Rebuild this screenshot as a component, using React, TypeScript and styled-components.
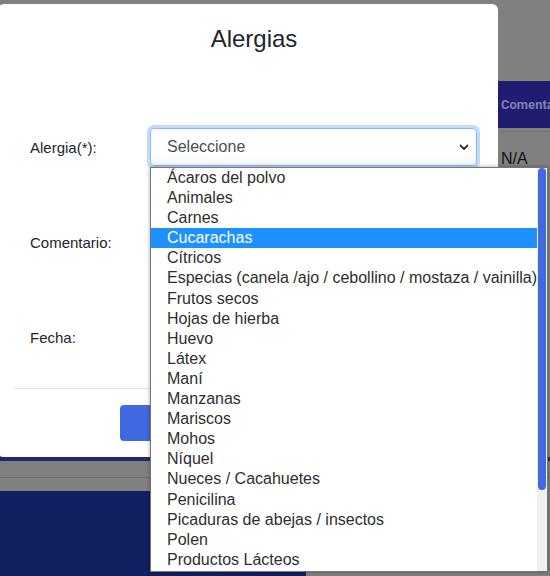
import React from "react";
import styled, { createGlobalStyle } from "styled-components";

const GlobalStyle = createGlobalStyle`
  html, body {
    margin: 0;
    padding: 0;
    width: 550px;
    height: 576px;
    overflow: hidden;
    font-family: "Liberation Sans", Arial, sans-serif;
  }
  * { box-sizing: border-box; }
`;

const Screen = styled.div`
  position: relative;
  width: 550px;
  height: 576px;
  overflow: hidden;
  background: #808080;
`;

/* Page behind the dimmed backdrop */
const BackPage = styled.div`
  display: flex;
  flex-direction: column;
  height: 100%;
`;

const TopGap = styled.div`
  height: 81px;
`;

const TableHead = styled.div`
  height: 47px;
  background: #1f1c72;
  display: grid;
  grid-template-columns: 501px 1fr;
  align-items: center;
`;

const HeadCell = styled.div`
  font-family: Roboto, "Liberation Sans", sans-serif;
  font-weight: 700;
  font-size: 13px;
  color: #7d80ad;
  white-space: nowrap;
  overflow: hidden;
`;

const TableRow = styled.div`
  margin-top: 3px;
  border-top: 1px solid #777;
  height: 54px;
  display: grid;
  grid-template-columns: 501px 1fr;
  align-items: center;
`;

const Cell = styled.div`
  font-size: 16px;
  line-height: 20px;
  color: #141414;
  white-space: nowrap;
  overflow: hidden;
`;

const Filler = styled.div`
  flex: 1;
`;

const FooterStrip = styled.div`
  height: 4px;
  background: #1e2a6a;
`;

const GrayBand = styled.div`
  height: 30px;
  padding-top: 16px;
`;

const BandLine = styled.div`
  height: 1px;
  background: #6c6c6c;
`;

const NavyBlock = styled.div`
  height: 85px;
  width: 306px;
  background: #121f60;
`;

/* Modal */
const Modal = styled.div`
  position: absolute;
  left: -2px;
  top: 4px;
  width: 500px;
  height: 453px;
  background: #fff;
  border-radius: 6px;
  display: flex;
  flex-direction: column;
`;

const Title = styled.h2`
  margin: 0;
  padding: 20px 0 0 12px;
  font-size: 24px;
  line-height: 29px;
  font-weight: 400;
  text-align: center;
  color: #212529;
`;

const Form = styled.div`
  margin-top: 75px;
  padding-left: 32px;
  display: grid;
  grid-template-columns: 120px 327px;
  grid-template-rows: 38px 62px 38px;
  row-gap: 45px;
  align-items: center;
`;

const Label = styled.label`
  font-size: 15px;
  color: #212529;
`;

const SelectBox = styled.div`
  height: 38px;
  border: 1px solid #80bdff;
  border-radius: 4px;
  box-shadow: 0 0 0 3px #c2dcf8;
  padding: 0 7px 0 16px;
  display: flex;
  align-items: center;
  justify-content: space-between;
  font-size: 16px;
  color: #495057;
  background: linear-gradient(#fff 70%, #f6f6f6);
`;

const TextArea = styled.div`
  height: 62px;
  border: 1px solid #ced4da;
  border-radius: 4px;
`;

const DateBox = styled.div`
  height: 38px;
  border: 1px solid #ced4da;
  border-radius: 4px;
`;

const Separator = styled.div`
  margin: 32px 14px 0 16px;
  height: 1px;
  background: #e1e0ee;
`;

const Footer = styled.div`
  padding: 16px 0;
  display: flex;
  justify-content: center;
`;

const PrimaryButton = styled.button`
  width: 256px;
  height: 36px;
  border: none;
  border-radius: 4px;
  background: #4169e1;
`;

/* Native-like dropdown list */
const OptionList = styled.div`
  position: absolute;
  left: 150px;
  top: 167px;
  width: 398px;
  height: 405px;
  border: 1px solid #767676;
  background: #fff;
  display: flex;
  box-shadow: 0 0 4px rgba(0, 0, 0, 0.35);
`;

const Options = styled.div`
  flex: 1;
  min-width: 0;
  overflow: hidden;
`;

const Option = styled.div<{ $active?: boolean }>`
  height: 20.1px;
  line-height: 20px;
  padding-left: 16px;
  font-size: 16px;
  white-space: nowrap;
  color: ${(p) => (p.$active ? "#fff" : "#2e2e2e")};
  background: ${(p) => (p.$active ? "#1e90ff" : "transparent")};
`;

const ScrollTrack = styled.div`
  width: 10px;
  background: #f0f0f0;
  padding: 0 1px;
`;

const ScrollThumb = styled.div`
  width: 100%;
  background: #4169e1;
  border-radius: 5px;
`;

const options = [
  "Ácaros del polvo",
  "Animales",
  "Carnes",
  "Cucarachas",
  "Cítricos",
  "Especias (canela /ajo / cebollino / mostaza / vainilla)",
  "Frutos secos",
  "Hojas de hierba",
  "Huevo",
  "Látex",
  "Maní",
  "Manzanas",
  "Mariscos",
  "Mohos",
  "Níquel",
  "Nueces / Cacahuetes",
  "Penicilina",
  "Picaduras de abejas / insectos",
  "Polen",
  "Productos Lácteos",
  "Sésamo",
  "Soya",
  "Sulfitos",
  "Trigo",
  "Otras",
];

const VISIBLE = 20;
const TRACK_H = 403;

const Chevron = () => (
  <svg width="10" height="7" viewBox="0 0 10 7">
    <polyline
      points="1.5,1.5 5,5 8.5,1.5"
      fill="none"
      stroke="#333"
      strokeWidth="1.8"
      strokeLinecap="round"
      strokeLinejoin="round"
    />
  </svg>
);

export default function App() {
  const thumbH = Math.round((TRACK_H * VISIBLE) / options.length);
  return (
    <>
      <GlobalStyle />
      <Screen>
        <BackPage>
          <TopGap />
          <TableHead>
            <HeadCell />
            <HeadCell>Comentario</HeadCell>
          </TableHead>
          <TableRow>
            <Cell />
            <Cell>N/A</Cell>
          </TableRow>
          <Filler />
          <FooterStrip />
          <GrayBand>
            <BandLine />
          </GrayBand>
          <NavyBlock />
        </BackPage>

        <Modal>
          <Title>Alergias</Title>
          <Form>
            <Label>Alergia(*):</Label>
            <SelectBox>
              <span>Seleccione</span>
              <Chevron />
            </SelectBox>
            <Label>Comentario:</Label>
            <TextArea />
            <Label>Fecha:</Label>
            <DateBox />
          </Form>
          <Separator />
          <Footer>
            <PrimaryButton aria-label="Guardar" />
          </Footer>
        </Modal>

        <OptionList>
          <Options>
            {options.slice(0, VISIBLE).map((o) => (
              <Option key={o} $active={o === "Cucarachas"}>
                {o}
              </Option>
            ))}
          </Options>
          <ScrollTrack>
            <ScrollThumb style={{ height: thumbH }} />
          </ScrollTrack>
        </OptionList>
      </Screen>
    </>
  );
}
